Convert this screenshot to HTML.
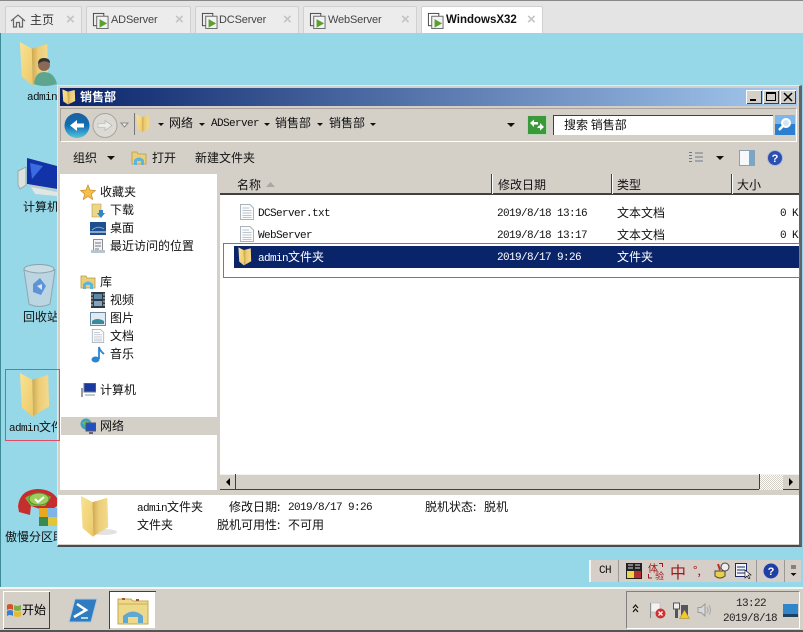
<!DOCTYPE html>
<html><head><meta charset="utf-8">
<style>
html,body{margin:0;padding:0}
body{width:803px;height:632px;overflow:hidden;position:relative;background:#96d7e8;font:12px/14px "WenQuanYi Zen Hei","Noto Sans CJK SC",sans-serif;color:#111}
div,svg,span.a{position:absolute}
.t{position:absolute;white-space:nowrap;line-height:14px;height:14px}
.t i{font:11px/14px "Liberation Mono",monospace;letter-spacing:-.6px}
.m{font:11px/14px "Liberation Mono",monospace;letter-spacing:-.6px;margin-top:1px}
.tab{top:6px;height:27px;background:#ececec;border:1px solid #d0d0d0;border-bottom:0;box-sizing:border-box;border-radius:2px 2px 0 0}
.tl{font:11px/14px "Liberation Sans",sans-serif;letter-spacing:-.15px;color:#444;top:13px}
.x{top:13px;color:#c4c4c4;font:bold 15px/14px "Liberation Sans",sans-serif}
.ar{width:0;height:0;border:3px solid transparent;border-top:3px solid #111;border-bottom:0}
.wb{top:90px;width:16px;height:14px;background:#d4d0c8;box-shadow:inset 1px 1px 0 #fff,inset -1px -1px 0 #404040}
.sep{top:174px;width:1px;height:20px;background:#404040;box-shadow:1px 0 0 #fff}
</style></head>
<body>
<svg width="0" height="0" style="position:absolute"><defs>
<linearGradient id="fy" x1="0" y1="0" x2="1" y2="1"><stop offset="0" stop-color="#f9e394"/><stop offset="1" stop-color="#edc968"/></linearGradient>
<linearGradient id="fb" x1="0" y1="0" x2="1" y2="0"><stop offset="0" stop-color="#cfa84e"/><stop offset=".4" stop-color="#eccd78"/><stop offset="1" stop-color="#f3da8c"/></linearGradient>
<symbol id="folder" viewBox="0 0 34 48" preserveAspectRatio="none"><path d="M14 8L31 3L32 36L15 46Z" fill="url(#fb)"/><path d="M1 1L14 8L15 47L3 37Z" fill="url(#fy)"/></symbol>
<symbol id="doc" viewBox="0 0 16 16"><path d="M1.500.5H11L14.500 4V15.500H1.500Z" fill="#fbfbfb" stroke="#a9b4bd"/><path d="M3.500 4H10M3.500 6.500H12.500M3.500 9H12.500M3.500 11.500H12.500M3.500 13.500H12.500" stroke="#bcc6ce"/></symbol>
<symbol id="vm" viewBox="0 0 18 18"><rect x="1.500" y="1.500" width="11" height="13" fill="none" stroke="#444"/><rect x="5" y="4.500" width="12" height="13" fill="#f2f2f2" stroke="#666"/><path d="M8 7.500L16 12L8 16.500Z" fill="#5aa02c"/></symbol>
</defs></svg>

<!-- Tab bar -->
<div style="left:0;top:0;width:803px;height:33px;background:#e4e4e4;border-top:1px solid #888;box-sizing:border-box"></div>
<div class="tab" style="left:5px;width:77px"></div>
<div class="tab" style="left:86px;width:105px"></div>
<div class="tab" style="left:195px;width:104px"></div>
<div class="tab" style="left:303px;width:114px"></div>
<div class="tab" style="left:421px;width:122px;background:#fff"></div>
<svg style="left:10px;top:13px" width="16" height="15" viewBox="0 0 16 15"><path d="M1 8L8 2L15 8M3.500 6.500V14H6.500V9.500H9.500V14H12.500V6.500" fill="none" stroke="#666" stroke-width="1.200"/></svg>
<div class="t" style="left:30px;top:13px;color:#333">主页</div><div class="t x" style="left:66px">×</div>
<svg style="left:92px;top:12px" width="17" height="17"><use href="#vm"/></svg>
<div class="t tl" style="left:111px">ADServer</div><div class="t x" style="left:175px">×</div>
<svg style="left:201px;top:12px" width="17" height="17"><use href="#vm"/></svg>
<div class="t tl" style="left:219px">DCServer</div><div class="t x" style="left:283px">×</div>
<svg style="left:309px;top:12px" width="17" height="17"><use href="#vm"/></svg>
<div class="t tl" style="left:328px">WebServer</div><div class="t x" style="left:401px">×</div>
<svg style="left:427px;top:12px" width="17" height="17"><use href="#vm"/></svg>
<div class="t tl" style="left:446px;font-weight:bold;font-size:11.500px;letter-spacing:0;color:#111">WindowsX32</div><div class="t x" style="left:527px">×</div>

<!-- Desktop -->
<div style="left:0;top:33px;width:1px;height:555px;background:#3c8a94"></div>
<svg style="left:19px;top:41px" width="31" height="46"><use href="#folder"/></svg>
<svg style="left:32px;top:56px" width="28" height="32" viewBox="0 0 28 32"><circle cx="12" cy="9" r="6" fill="#8a6a55"/><path d="M6 8Q6 2 12 2Q18 2 18 7Q12 3 6 8Z" fill="#333"/><path d="M2 28Q3 16 12 16Q22 16 25 28Q12 32 2 28Z" fill="#5da58f"/></svg>
<div class="t m" style="left:27px;top:90px">admin</div>
<svg style="left:17px;top:155px" width="40" height="42" viewBox="0 0 40 42"><path d="M1 16L9 12V30L3 34L1 30Z" fill="#dfe3df" stroke="#9aa"/><path d="M10 3L40 11V34L10 29Z" fill="#1233a8"/><path d="M13 8L26 11L15 24Z" fill="#3b6be0"/><path d="M14 32L40 37V41L18 39Z" fill="#dfe6e4"/><path d="M10 29L40 34V36L10 31Z" fill="#bfc9c6"/></svg>
<div class="t" style="left:23px;top:200px">计算机</div>
<svg style="left:22px;top:262px" width="35" height="47" viewBox="0 0 35 47"><ellipse cx="17" cy="7" rx="15" ry="4.500" fill="#c8dce4" stroke="#8aa0aa"/><path d="M2 8L7 42Q17 47 28 42L33 8Q17 14 2 8Z" fill="#bcd5e2" stroke="#8fa6b2"/><path d="M11 22L18 16L24 24L19 33L11 30Z" fill="#5e93d8"/><path d="M15 24L20 22L20 28Z" fill="#d6e6f2"/></svg>
<div class="t" style="left:23px;top:310px">回收站</div>
<svg style="left:19px;top:372px" width="32" height="46"><use href="#folder"/></svg>
<div class="t" style="left:9px;top:420px"><i>admin</i>文件夹</div>
<div style="left:5px;top:369px;width:55px;height:72px;border:1px solid #e04a64;box-sizing:border-box;z-index:5"></div>
<svg style="left:17px;top:486px" width="40" height="42" viewBox="0 0 40 42"><path d="M1 20Q3 4 20 3Q34 3 40 12V20L32 26L14 20L13 29L2 26Z" fill="#c62e2e"/><path d="M8 12Q20 3 34 11L28 20H14Z" fill="#7ab53a"/><ellipse cx="22" cy="13" rx="10" ry="6" fill="#9ccf60" stroke="#4d8f2a"/><path d="M18 13L21 16L27 11" stroke="#fff" stroke-width="2" fill="none"/><rect x="22" y="22" width="9" height="9" fill="#e9a820"/><rect x="31" y="22" width="9" height="9" fill="#7fb5e6"/><rect x="22" y="31" width="9" height="9" fill="#3a8a50"/><rect x="31" y="31" width="9" height="9" fill="#e3c53a"/></svg>
<div class="t" style="left:5px;top:530px">傲慢分区助</div>

<!-- Window -->
<div style="left:57px;top:85px;width:745px;height:462px;background:#d4d0c8;border-top:1px solid #e8e8e8;border-left:1px solid #e8e8e8;border-right:3px solid #606468;border-bottom:2px solid #484c52;box-sizing:border-box"></div>
<div style="left:60px;top:88px;width:737px;height:18px;background:linear-gradient(90deg,#0a246a,#a6caf0)"></div>
<svg style="left:62px;top:89px" width="14" height="16"><use href="#folder"/></svg>
<div class="t" style="left:80px;top:90px;color:#fff;font-weight:bold">销售部</div>
<div class="wb" style="left:746px"></div><div style="left:750px;top:99px;width:6px;height:2px;background:#000"></div>
<div class="wb" style="left:763px"></div><div style="left:766px;top:92px;width:10px;height:9px;border:1px solid #000;border-top-width:2px;box-sizing:border-box"></div>
<div class="wb" style="left:780px"></div><svg style="left:783px;top:92px" width="10" height="10"><path d="M1 1L9 9M9 1L1 9" stroke="#000" stroke-width="1.500"/></svg>

<!-- Address -->
<div style="left:60px;top:108px;width:737px;height:34px;border:1px solid #a8a49c;border-right-color:#fff;border-bottom-color:#fff;box-sizing:border-box"></div>
<svg style="left:64px;top:112px" width="70" height="27" viewBox="0 0 70 27"><defs><linearGradient id="bb" x1="0" y1="0" x2="0" y2="1"><stop offset="0" stop-color="#1d5f9e"/><stop offset=".5" stop-color="#0f6fb5"/><stop offset="1" stop-color="#57c4dc"/></linearGradient></defs><circle cx="13" cy="13.500" r="12.500" fill="url(#bb)"/><path d="M6 13.500L13 8V11.500H20V15.500H13V19Z" fill="#fff"/><circle cx="41" cy="13.500" r="12" fill="#dcdad4" stroke="#a8a49e"/><path d="M48 13.500L41 8.500V11.500H34V15.500H41V18.500Z" fill="#ecebe6" stroke="#b2aea8" stroke-width=".6"/><path d="M57 11H64L60.500 15Z" fill="#f2f0ea" stroke="#8c8a84"/></svg>
<div style="left:134px;top:113px;width:1px;height:22px;background:#777"></div>
<svg style="left:136px;top:114px" width="14" height="19"><use href="#folder"/></svg>
<div class="ar" style="left:158px;top:123px"></div><div class="t" style="left:169px;top:116px">网络</div>
<div class="ar" style="left:199px;top:123px"></div><div class="t m" style="left:211px;top:116px">ADServer</div>
<div class="ar" style="left:264px;top:123px"></div><div class="t" style="left:275px;top:116px">销售部</div>
<div class="ar" style="left:317px;top:123px"></div><div class="t" style="left:329px;top:116px">销售部</div>
<div class="ar" style="left:370px;top:123px"></div>
<div class="ar" style="left:507px;top:123px;border-width:4px;border-top-width:4px"></div>
<svg style="left:527px;top:115px" width="20" height="20" viewBox="0 0 20 20"><rect x=".5" y=".5" width="19" height="19" fill="#3a9a3a" stroke="#b8d8b8"/><path d="M3 8L7 4.500V7H11V9.500H7V12ZM17 12L13 15.500V13H10L12 10.500H13V8Z" fill="#fff"/></svg>
<div style="left:553px;top:115px;width:220px;height:20px;background:#fff;border-top:1px solid #404040;border-left:1px solid #404040;box-sizing:border-box"></div>
<div class="t" style="left:564px;top:118px">搜索 销售部</div>
<svg style="left:775px;top:115px" width="20" height="20" viewBox="0 0 20 20"><rect width="20" height="20" fill="#2c7fd0"/><rect width="20" height="9" fill="#7db6e8"/><circle cx="11" cy="8" r="4" fill="#cfe6f7" stroke="#fff" stroke-width="2"/><path d="M8 11L4 15" stroke="#fff" stroke-width="2.500"/></svg>

<!-- Toolbar -->
<div class="t" style="left:73px;top:151px">组织</div><div class="ar" style="left:107px;top:156px;border-width:4px;border-top-width:4px"></div>
<svg style="left:131px;top:150px" width="17" height="16" viewBox="0 0 17 16"><path d="M1 2H6L7 4H15V14H1Z" fill="#e9cf7a" stroke="#b89a48" stroke-width=".8"/><path d="M3 15V10Q8 5 13 10V15H10V11H6V15Z" fill="#5fb4dc"/></svg>
<div class="t" style="left:152px;top:151px">打开</div>
<div class="t" style="left:195px;top:151px">新建文件夹</div>
<svg style="left:688px;top:151px" width="16" height="14"><path d="M1 1.500H4M1 4.500H4M1 7.500H4M1 10.500H4M7 2H15M7 6H15M7 10H15" stroke="#6a7a8a" fill="none"/></svg>
<div class="ar" style="left:716px;top:156px;border-width:4px;border-top-width:4px"></div>
<svg style="left:739px;top:150px" width="16" height="16"><rect x=".5" y=".5" width="15" height="15" fill="#f6f8fa" stroke="#8ca0b2"/><rect x="10" y="1" width="5" height="14" fill="#76a8cc"/></svg>
<svg style="left:767px;top:150px" width="16" height="16" viewBox="0 0 16 16"><circle cx="8" cy="8" r="7.500" fill="#2a4fb0" stroke="#a8b8d8"/><text x="8" y="12" font-family="Liberation Sans" font-weight="bold" font-size="11" fill="#fff" text-anchor="middle">?</text></svg>

<!-- Nav pane -->
<div style="left:60px;top:174px;width:157px;height:316px;background:#fff"></div>
<div style="left:61px;top:417px;width:156px;height:18px;background:#d4d0c8"></div>
<svg style="left:80px;top:184px" width="16" height="16" viewBox="0 0 16 16"><path d="M8 1L10 6L15.500 6.500L11.300 10L12.700 15.500L8 12.500L3.300 15.500L4.700 10L.5 6.500L6 6Z" fill="#f4c04a" stroke="#c8892a" stroke-width=".7"/></svg>
<div class="t" style="left:100px;top:185px">收藏夹</div>
<svg style="left:91px;top:203px" width="15" height="15" viewBox="0 0 15 15"><path d="M1 1H10V14H1Z" fill="#ecd68a" stroke="#b89a48" stroke-width=".6"/><path d="M8 7H12V10H14L10 15L6 10H8Z" fill="#2f86cc"/></svg>
<div class="t" style="left:110px;top:203px">下载</div>
<svg style="left:90px;top:222px" width="16" height="13"><rect width="16" height="13" fill="#1f4f8f"/><rect y="9" width="16" height="2" fill="#8aa8c8"/><path d="M2 8Q8 3 14 7" stroke="#7ba8d8" fill="none"/></svg>
<div class="t" style="left:110px;top:221px">桌面</div>
<svg style="left:90px;top:239px" width="16" height="15" viewBox="0 0 16 15"><rect x="3.500" y=".5" width="9" height="12" fill="#f2f2f2" stroke="#8a8f94"/><path d="M5 4H11M5 7H11M5 10H9" stroke="#778"/><rect x="1" y="11" width="14" height="3" fill="#b9c4cc"/></svg>
<div class="t" style="left:110px;top:239px">最近访问的位置</div>
<svg style="left:80px;top:274px" width="16" height="16" viewBox="0 0 16 16"><path d="M1 2H6L7 4H15V14H1Z" fill="#e9cf7a" stroke="#b89a48" stroke-width=".8"/><path d="M3 15V10Q8 5 13 10V15H10V11H6V15Z" fill="#5fb4dc"/></svg>
<div class="t" style="left:100px;top:275px">库</div>
<svg style="left:91px;top:292px" width="14" height="16"><rect width="14" height="16" fill="#2f3a44"/><rect x="3" y="2" width="8" height="5" fill="#5d88a8"/><rect x="3" y="9" width="8" height="5" fill="#7fa5c0"/><path d="M1 1.500V15M13 1.500V15" stroke="#ddd" stroke-dasharray="2 1.500"/></svg>
<div class="t" style="left:110px;top:293px">视频</div>
<svg style="left:90px;top:312px" width="16" height="14"><rect x=".5" y=".5" width="15" height="13" fill="#dfeaf2" stroke="#6a8aa0"/><path d="M2 9Q7 5 14 9V12H2Z" fill="#3a8a9e"/></svg>
<div class="t" style="left:110px;top:311px">图片</div>
<svg style="left:91px;top:328px" width="14" height="16"><use href="#doc"/></svg>
<div class="t" style="left:110px;top:329px">文档</div>
<svg style="left:91px;top:346px" width="14" height="17" viewBox="0 0 14 17"><ellipse cx="4.500" cy="13.500" rx="4" ry="3" fill="#2c86cf"/><path d="M8 13V1Q9 5 13 8" stroke="#2c86cf" stroke-width="1.800" fill="none"/></svg>
<div class="t" style="left:110px;top:347px">音乐</div>
<svg style="left:80px;top:383px" width="16" height="15" viewBox="0 0 16 15"><rect x="4" y="0" width="12" height="9" fill="#1a3aa0" stroke="#778"/><rect x="1" y="5" width="2" height="9" fill="#99a"/><path d="M5 11H15V13H5Z" fill="#bcc"/></svg>
<div class="t" style="left:100px;top:383px">计算机</div>
<svg style="left:80px;top:418px" width="16" height="17" viewBox="0 0 16 17"><circle cx="6" cy="6" r="5.500" fill="#3ea0c0"/><path d="M2 5Q6 2 9 4L6 8Z" fill="#6abf60"/><rect x="6" y="5" width="10" height="8" fill="#1f4fc0" stroke="#556"/><path d="M9 15H13" stroke="#667" stroke-width="2"/></svg>
<div class="t" style="left:100px;top:419px">网络</div>

<!-- List -->
<div style="left:220px;top:174px;width:579px;height:300px;background:#fff"></div>
<div style="left:220px;top:174px;width:579px;height:21px;background:#d4d0c8;border-bottom:2px solid #404040;box-sizing:border-box"></div>
<div class="t" style="left:237px;top:178px">名称</div>
<svg style="left:266px;top:182px" width="9" height="5"><path d="M0 5L4.500 0L9 5Z" fill="#a8a8a4"/></svg>
<div class="sep" style="left:491px"></div><div class="t" style="left:498px;top:178px">修改日期</div>
<div class="sep" style="left:611px"></div><div class="t" style="left:617px;top:178px">类型</div>
<div class="sep" style="left:731px"></div><div class="t" style="left:737px;top:178px">大小</div>

<svg style="left:239px;top:204px" width="16" height="16"><use href="#doc"/></svg>
<div class="t m" style="left:258px;top:206px">DCServer.txt</div>
<div class="t m" style="left:497px;top:206px">2019/8/18 13:16</div>
<div class="t" style="left:617px;top:206px">文本文档</div>
<div class="t m" style="left:780px;top:206px">0 K</div>
<svg style="left:239px;top:226px" width="16" height="16"><use href="#doc"/></svg>
<div class="t m" style="left:258px;top:228px">WebServer</div>
<div class="t m" style="left:497px;top:228px">2019/8/18 13:17</div>
<div class="t" style="left:617px;top:228px">文本文档</div>
<div class="t m" style="left:780px;top:228px">0 K</div>
<div style="left:234px;top:246px;width:565px;height:22px;background:#0a246a"></div>
<svg style="left:238px;top:247px" width="14" height="19"><use href="#folder"/></svg>
<div class="t" style="left:258px;top:250px;color:#fff"><i>admin</i>文件夹</div>
<div class="t m" style="left:497px;top:250px;color:#fff">2019/8/17 9:26</div>
<div class="t" style="left:617px;top:250px;color:#fff">文件夹</div>
<div style="left:223px;top:243px;width:577px;height:35px;border:1px solid #e04a64;box-sizing:border-box;z-index:5"></div>

<!-- Scrollbar -->
<div style="left:220px;top:474px;width:579px;height:16px;background:#d4d0c8;border-top:1px solid #f4f2ee;box-sizing:border-box"></div>
<div style="left:220px;top:489px;width:579px;height:1px;background:#404040"></div>
<div style="left:759px;top:475px;width:24px;height:15px;background:repeating-conic-gradient(#fff 0 25%,#d4d0c8 0 50%) 0 0/2px 2px"></div>
<div style="left:235px;top:474px;width:1px;height:15px;background:#404040"></div>
<div style="left:759px;top:474px;width:1px;height:15px;background:#404040"></div>
<svg style="left:225px;top:478px" width="6" height="8"><path d="M5 0V8L1 4Z" fill="#000"/></svg>
<svg style="left:788px;top:478px" width="6" height="8"><path d="M1 0V8L5 4Z" fill="#000"/></svg>

<!-- Details -->
<div style="left:58px;top:495px;width:741px;height:49px;background:#fff"></div>
<svg style="left:80px;top:495px" width="38" height="43" viewBox="0 0 38 43"><ellipse cx="24" cy="37" rx="13" ry="3" fill="#e2e2e2"/><use href="#folder" width="30" height="43"/></svg>
<div class="t" style="left:137px;top:500px"><i>admin</i>文件夹</div>
<div class="t" style="left:229px;top:500px">修改日期:</div><div class="t m" style="left:288px;top:500px">2019/8/17 9:26</div>
<div class="t" style="left:425px;top:500px">脱机状态:</div><div class="t" style="left:484px;top:500px">脱机</div>
<div class="t" style="left:137px;top:518px">文件夹</div>
<div class="t" style="left:217px;top:518px">脱机可用性:</div><div class="t" style="left:288px;top:518px">不可用</div>

<!-- IME bar -->
<div style="left:590px;top:560px;width:211px;height:22px;background:#d6cfc9"></div>
<div style="left:589px;top:560px;width:2px;height:22px;background:#f4f4f0"></div>
<div class="t m" style="left:599px;top:563px">CH</div>
<div style="left:618px;top:560px;width:1px;height:22px;background:#9a9a94"></div>
<svg style="left:626px;top:563px" width="16" height="16"><rect width="16" height="16" fill="#222"/><rect x="1" y="8" width="7" height="7" fill="#e6d84a"/><rect x="8" y="8" width="7" height="7" fill="#b03030"/><path d="M2 2H7M2 5H7M9 2H14M9 5H14" stroke="#ddd"/></svg>
<div class="t" style="left:648px;top:561px;color:#a01a1a;font-size:10px">体</div>
<div class="t" style="left:655px;top:569px;color:#a01a1a;font-size:9px">验</div>
<svg style="left:647px;top:562px" width="17" height="18"><path d="M12 1.500H15.500V5M1.500 12V16H5" fill="none" stroke="#a01a1a"/></svg>
<div class="t" style="left:670px;top:563px;color:#a01a1a;font-size:16px;line-height:16px;height:16px">中</div>
<div class="t" style="left:693px;top:564px;color:#a01a1a">°,</div>
<svg style="left:714px;top:562px" width="16" height="18" viewBox="0 0 16 18"><circle cx="11" cy="5" r="4" fill="#eee" stroke="#444"/><path d="M1 9H11V14Q6 18 1 14Z" fill="#e9d04a" stroke="#443"/><path d="M4 2L6 8" stroke="#c03020" stroke-width="2"/></svg>
<svg style="left:735px;top:563px" width="17" height="16" viewBox="0 0 17 16"><rect x=".5" y=".5" width="11" height="13" fill="#f4f4f8" stroke="#1a2a6a"/><path d="M2 4H10M2 7H10M2 10H10" stroke="#1a2a6a"/><path d="M10 7V15L12 13L14 16L15 15L13 12H16Z" fill="#fff" stroke="#000" stroke-width=".6"/></svg>
<div style="left:756px;top:560px;width:1px;height:22px;background:#9a9a94"></div>
<svg style="left:763px;top:563px" width="16" height="16" viewBox="0 0 16 16"><circle cx="8" cy="8" r="7.500" fill="#1f3fa8"/><text x="8" y="12" font-family="Liberation Sans" font-weight="bold" font-size="11" fill="#fff" text-anchor="middle">?</text></svg>
<div style="left:784px;top:560px;width:1px;height:22px;background:#9a9a94"></div>
<svg style="left:790px;top:565px" width="7" height="12"><path d="M1 1H6M1 3H6" stroke="#333"/><path d="M0.500 8H6.500L3.500 11Z" fill="#111"/></svg>

<!-- Taskbar -->
<div style="left:0;top:587px;width:803px;height:45px;background:#d4d0c8;border-top:2px solid #f4f4f0;border-bottom:2px solid #555;box-sizing:border-box"></div>
<div style="left:3px;top:591px;width:47px;height:38px;background:#d4d0c8;box-shadow:inset 1px 1px 0 #fff,inset -1px -1px 0 #404040"></div>
<svg style="left:6px;top:603px" width="16" height="15" viewBox="0 0 16 15"><path d="M1 2Q4 0 7 2V7Q4 5 1 7Z" fill="#d8502a"/><path d="M8 2Q11 4 15 2V7Q11 9 8 7Z" fill="#7ab040"/><path d="M1 8Q4 6 7 8V13Q4 11 1 13Z" fill="#3a80d0"/><path d="M8 8Q11 10 15 8V13Q11 15 8 13Z" fill="#e8b830"/></svg>
<div class="t" style="left:22px;top:603px;color:#000">开始</div>
<svg style="left:68px;top:598px" width="30" height="25" viewBox="0 0 30 25"><path d="M7 1H29L23 24H1Z" fill="#2f7dc0" stroke="#b0c8dc"/><path d="M9 6L18 12L6 19" stroke="#fff" stroke-width="2.500" fill="none"/><path d="M13 20H20" stroke="#cfe" stroke-width="1.500"/></svg>
<div style="left:109px;top:591px;width:47px;height:38px;background:#fff;box-shadow:inset 1px 1px 0 #404040,inset -1px -1px 0 #d4d0c8"></div>
<svg style="left:117px;top:596px" width="32" height="29" viewBox="0 0 32 29"><path d="M1 3H14L16 5H31V28H1Z" fill="#edd98a" stroke="#c0a850"/><path d="M1 8H31" stroke="#c9ad58"/><rect x="5" y="2" width="3" height="2" fill="#b05030"/><rect x="19" y="3" width="3" height="2" fill="#b05030"/><path d="M6 27V20Q16 11 26 20V27H21V21H11V27Z" fill="#5fa8d4"/></svg>
<div style="left:626px;top:591px;width:174px;height:38px;border:1px solid;border-color:#808080 #fff #fff #808080;box-sizing:border-box"></div>
<svg style="left:632px;top:604px" width="7" height="10"><path d="M1 4L3.500 1L6 4M1 8L3.500 5L6 8" stroke="#111" fill="none" stroke-width="1.200"/></svg>
<svg style="left:649px;top:602px" width="17" height="17" viewBox="0 0 17 17"><path d="M1.500 1V16" stroke="#888"/><path d="M2 1H11V10H2Z" fill="#f2f2f2" stroke="#aaa" stroke-width=".5"/><circle cx="11.500" cy="11.500" r="5" fill="#d03030"/><path d="M9.500 9.500L13.500 13.500M13.500 9.500L9.500 13.500" stroke="#fff" stroke-width="1.300"/></svg>
<svg style="left:673px;top:602px" width="17" height="17" viewBox="0 0 17 17"><rect x=".5" y="1" width="6" height="6" fill="#eee" stroke="#555"/><rect x="2" y="7" width="3" height="9" fill="#555"/><rect x="8" y="3" width="7" height="12" fill="#556" /><path d="M11.500 8L16.500 16.500H6.500Z" fill="#f0c830" stroke="#a08010" stroke-width=".5"/></svg>
<svg style="left:697px;top:602px" width="16" height="16" viewBox="0 0 16 16"><path d="M1 5.500H4L8 2V14L4 10.500H1Z" fill="#d8d8d8" stroke="#9a9a9a"/><path d="M10 5Q12 8 10 11M12 3Q15 8 12 13" stroke="#a8a8a8" fill="none"/></svg>
<div class="t m" style="left:736px;top:596px;color:#222">13:22</div>
<div class="t m" style="left:723px;top:611px;color:#222">2019/8/18</div>
<svg style="left:783px;top:604px" width="15" height="13"><rect width="15" height="13" fill="#2f86c8"/><rect y="10" width="15" height="3" fill="#1f4060"/></svg>
</body></html>
